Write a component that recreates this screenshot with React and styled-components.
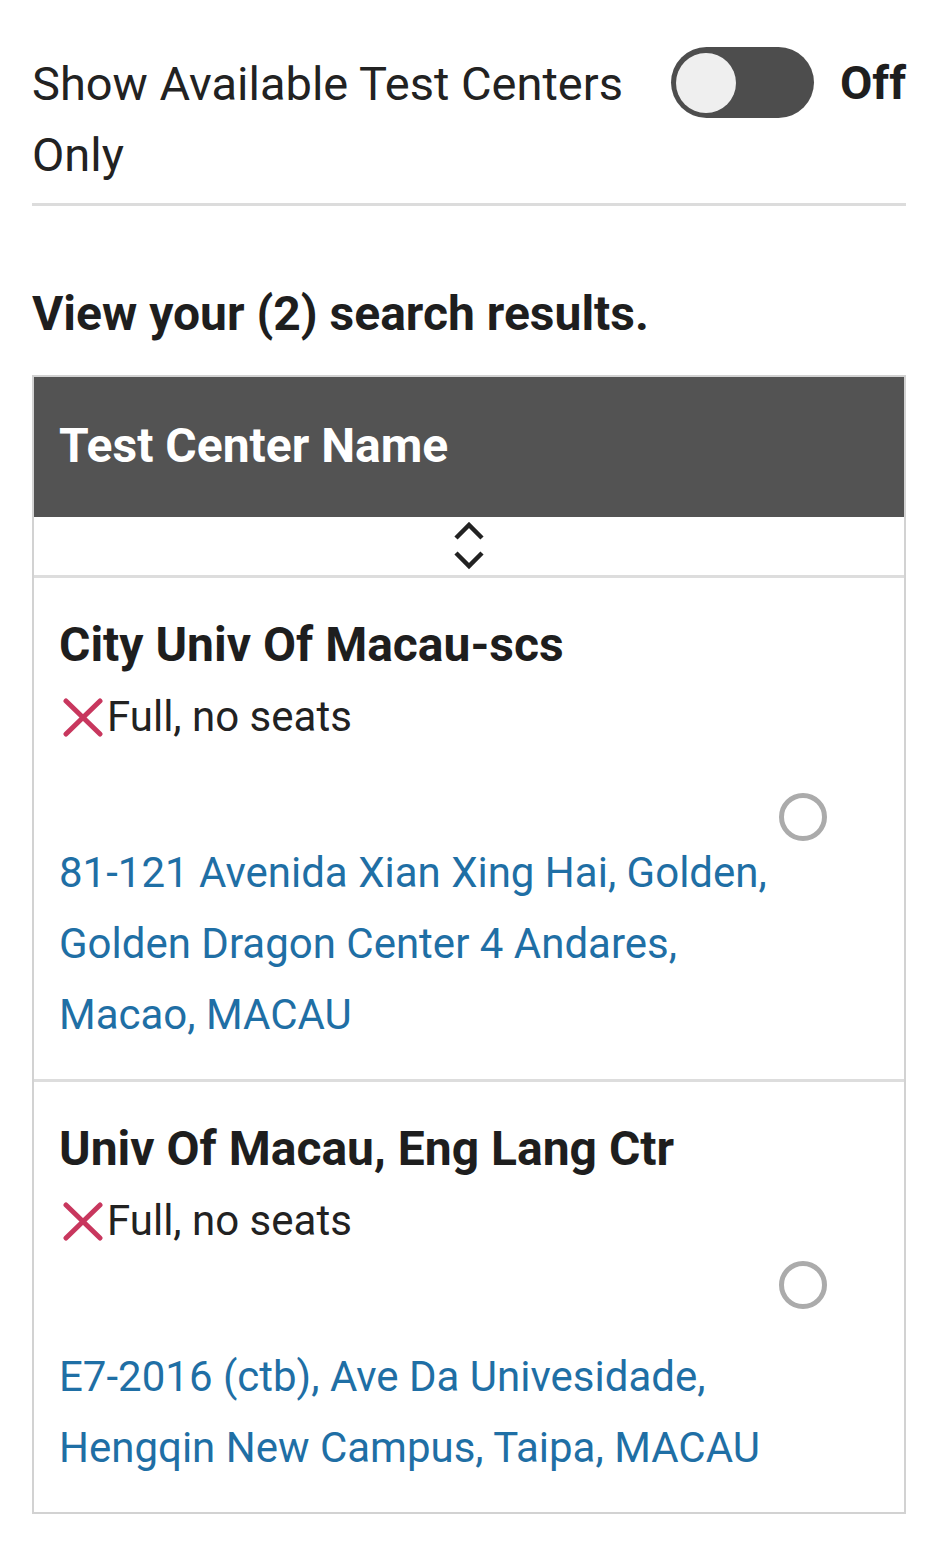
import React, { useState } from 'react';
import styled, { createGlobalStyle } from 'styled-components';

const GlobalStyle = createGlobalStyle`
  body {
    margin: 0;
    background: #ffffff;
    font-family: Roboto, 'Liberation Sans', sans-serif;
    color: #222222;
  }
`;

const Page = styled.div`
  padding: 48px 27px 31px 32px;
`;

const FilterRow = styled.div`
  display: flex;
  align-items: flex-start;
  gap: 20px;
  padding-bottom: 13px;
  border-bottom: 3px solid #dcdcdc;
`;

const FilterLabel = styled.div`
  flex: 1;
  font-size: 47px;
  line-height: 71px;
  color: #222;
`;

const SwitchWrap = styled.div`
  display: flex;
  align-items: center;
  gap: 26px;
  margin-top: -1px;
`;

const Track = styled.button`
  width: 143px;
  height: 71px;
  border: none;
  border-radius: 36px;
  background: ${(p) => (p.$on ? '#1f6fa5' : '#4d4d4d')};
  padding: 0 5px;
  display: flex;
  align-items: center;
  justify-content: ${(p) => (p.$on ? 'flex-end' : 'flex-start')};
  cursor: pointer;
`;

const Knob = styled.span`
  width: 60px;
  height: 60px;
  border-radius: 50%;
  background: #efefef;
`;

const SwitchText = styled.span`
  font-size: 47px;
  font-weight: 700;
  color: #1e1e1e;
`;

const ResultsTitle = styled.h2`
  margin: 78px 0 31px;
  font-size: 48px;
  line-height: 60px;
  font-weight: 700;
  color: #1e1e1e;
`;

const Table = styled.div`
  border: 2px solid #d2d2d2;
`;

const HeaderCell = styled.div`
  background: #535353;
  color: #ffffff;
  font-size: 48px;
  font-weight: 700;
  line-height: 56px;
  padding: 41px 25px 43px;
`;

const SortRow = styled.div`
  height: 58px;
  display: flex;
  align-items: center;
  justify-content: center;
`;

const Row = styled.div`
  display: flex;
  border-top: 3px solid #dddddd;
  padding: 31px 0 29px 25px;
`;

const Info = styled.div`
  flex: 1;
  min-width: 0;
`;

const Name = styled.div`
  font-size: 48px;
  font-weight: 700;
  line-height: 72px;
  color: #1e1e1e;
`;

const Status = styled.div`
  display: flex;
  align-items: center;
  gap: 3px;
  font-size: 42px;
  line-height: 72px;
  color: #222;
`;

const Address = styled.div`
  margin-top: 84px;
  font-size: 42px;
  line-height: 71px;
  color: #1f6fa5;
  white-space: nowrap;
`;

const RadioCell = styled.div`
  display: flex;
  align-items: center;
  padding: 0 77px 26px 12px;
`;

const Radio = styled.span`
  display: block;
  width: 48px;
  height: 48px;
  box-sizing: border-box;
  border-radius: 50%;
  border: 5px solid #ababab;
`;

const SortIcon = () => (
  <svg width="30" height="48" viewBox="0 0 30 48" fill="none" stroke="#222" strokeWidth="4.5">
    <path d="M2 16 L15 3 L28 16" />
    <path d="M2 31 L15 44 L28 31" />
  </svg>
);

const CrossIcon = () => (
  <svg
    width="42"
    height="40"
    viewBox="0 0 42 40"
    stroke="#c8375e"
    strokeWidth="5"
    strokeLinecap="round"
    style={{ marginLeft: 3 }}
  >
    <path d="M4 4 L38 37" />
    <path d="M38 4 L4 37" />
  </svg>
);

const centers = [
  {
    name: 'City Univ Of Macau-scs',
    address: ['81-121 Avenida Xian Xing Hai, Golden,', 'Golden Dragon Center 4 Andares,', 'Macao, MACAU'],
  },
  {
    name: 'Univ Of Macau, Eng Lang Ctr',
    address: ['E7-2016 (ctb), Ave Da Univesidade,', 'Hengqin New Campus, Taipa, MACAU'],
  },
];

export default function App() {
  const [onlyAvailable, setOnlyAvailable] = useState(false);

  return (
    <Page>
      <GlobalStyle />
      <FilterRow>
        <FilterLabel>Show Available Test Centers Only</FilterLabel>
        <SwitchWrap>
          <Track $on={onlyAvailable} onClick={() => setOnlyAvailable(!onlyAvailable)}>
            <Knob />
          </Track>
          <SwitchText>{onlyAvailable ? 'On' : 'Off'}</SwitchText>
        </SwitchWrap>
      </FilterRow>

      <ResultsTitle>View your ({centers.length}) search results.</ResultsTitle>

      <Table>
        <HeaderCell>Test Center Name</HeaderCell>
        <SortRow>
          <SortIcon />
        </SortRow>
        {centers.map((c) => (
          <Row key={c.name}>
            <Info>
              <Name>{c.name}</Name>
              <Status>
                <CrossIcon />
                Full, no seats
              </Status>
              <Address>
                {c.address.map((line) => (
                  <div key={line}>{line}</div>
                ))}
              </Address>
            </Info>
            <RadioCell>
              <Radio />
            </RadioCell>
          </Row>
        ))}
      </Table>
    </Page>
  );
}
